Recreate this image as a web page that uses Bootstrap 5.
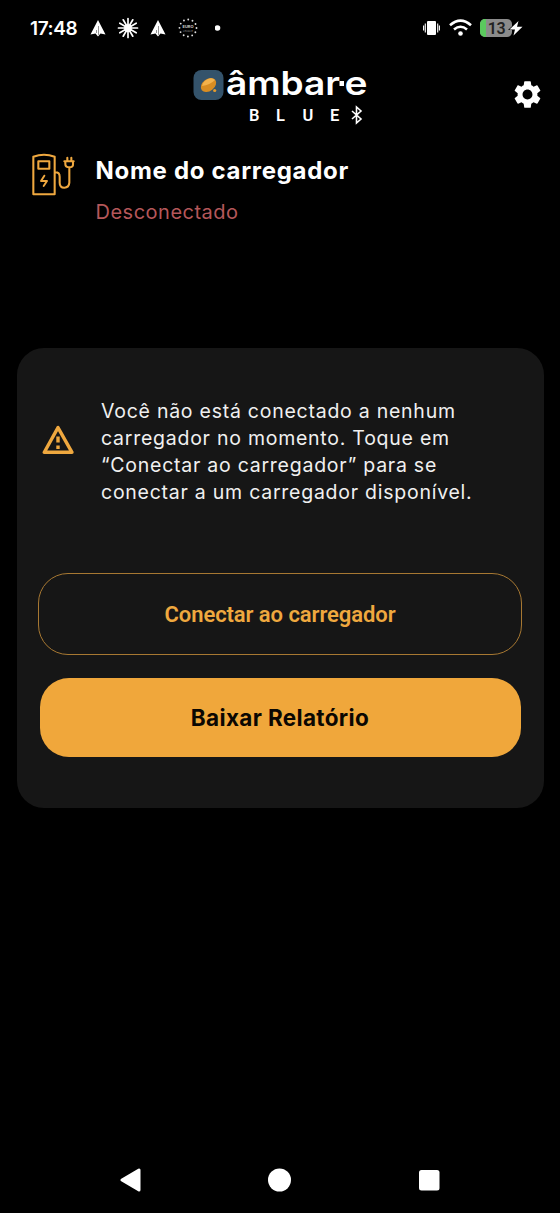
<!DOCTYPE html>
<html lang="pt-BR">
<head>
<meta charset="utf-8">
<meta name="viewport" content="width=device-width, initial-scale=1">
<title>Âmbar-e Blue</title>
<link href="https://cdn.jsdelivr.net/npm/bootstrap@5.3.0/dist/css/bootstrap.min.css" rel="stylesheet">
<script src="https://cdn.jsdelivr.net/npm/bootstrap@5.3.0/dist/js/bootstrap.bundle.min.js" defer></script>
<style>
  body { background:#000; color:#fff; font-family:Inter,"Open Sans",sans-serif; height:1213px; overflow:hidden; }
  svg { display:block; flex:none; }
  .status { height:56px; padding:0 37px 0 30px; }
  .clock { font:600 19px/1 Inter,sans-serif; width:60px; letter-spacing:-.4px; }
  .brand { height:88px; display:grid; grid-template-columns:1fr auto 1fr; padding:0 16px; }
  .gear { background:none; border:0; padding:0; justify-self:end; align-self:start; margin:22px 0 0; width:33px; }
  .charger { height:204px; padding:7px 30px 0; }
  .charger h1 { font-size:24px; line-height:32px; font-weight:700; margin:4px 0 11px; letter-spacing:.7px; }
  .charger p { font-size:20px; line-height:28px; color:#b5575a; font-weight:400; letter-spacing:.5px; }
  .panel { background:#161616; border-radius:27px; margin:0 16.5px; height:459.5px; padding:49.5px 21.5px 0; }
  .notice { font-size:19.5px; line-height:27.2px; font-weight:400; color:#f0f0f0; margin-left:27px; letter-spacing:.75px; }
  .notice span { display:block; white-space:nowrap; }
  .btn-connect, .btn-report { display:flex; align-items:center; justify-content:center; width:100%; font-size:22px; }
  .btn-connect { height:82px; border:1px solid #a77832; border-radius:30px; color:#efa83f; font-family:Roboto,sans-serif; font-weight:600; letter-spacing:-.07px; margin-top:67px; }
  .btn-report { height:78.5px; width:481px; border-radius:29px; background:#f0a73b; color:#0b0702; font-size:22.5px; font-weight:700; letter-spacing:.35px; margin:23px auto 0; border:0; }
  .sysnav { padding:0 120px; height:66px; }
</style>
</head>
<body class="d-flex flex-column">
<header class="status d-flex align-items-center">
  <span class="clock">17:48</span>
  <svg width="16" height="17" viewBox="0 0 16 17"><path d="M8 0 .5 14.500 5.500 13.500 8 16.500l2.500-3 5 1z" fill="#fff"/><path d="M8.500 6v9M6.500 10v3" stroke="#777" stroke-width=".8"/></svg>
  <svg style="margin-left:11px" width="22" height="22" viewBox="-11 -11 22 22"><g stroke="#fff" stroke-width="1.700" stroke-linecap="round"><path d="M0-9.500V9.500M-9.500 0H9.500M-8.200-4.800 8.200 4.800M-8.200 4.800 8.200-4.800M-4.800-8.200 4.800 8.200M-4.800 8.200 4.800-8.200"/></g><circle r="3.800" fill="#fff"/></svg>
  <svg style="margin-left:11px" width="16" height="17" viewBox="0 0 16 17"><path d="M8 0 .5 14.500 5.500 13.500 8 16.500l2.500-3 5 1z" fill="#fff"/><path d="M8.500 6v9M6.500 10v3" stroke="#777" stroke-width=".8"/></svg>
  <svg style="margin-left:12px" width="20" height="20" viewBox="-10 -10 20 20"><circle r="8.500" fill="none" stroke="#ddd" stroke-width="1.900" stroke-linecap="round" stroke-dasharray="0 4.450"/><text y="0" text-anchor="middle" font-size="4" font-weight="700" fill="#ccc">EURO</text><text y="3.500" text-anchor="middle" font-size="2.500" fill="#999">LEAGUE</text></svg>
  <svg style="margin-left:17px" width="6" height="6"><circle cx="2.500" cy="3" r="2.800" fill="#fff"/></svg>
  <svg class="ms-auto" width="17" height="16" viewBox="0 0 17 16"><rect x="4" y="1" width="9" height="14" rx="1" fill="#fff"/><path d="M2.300 3.500v9M14.700 3.500v9M.6 5.500v5M16.400 5.500v5" stroke="#fff" stroke-width="1.100"/></svg>
  <svg style="margin-left:9px" width="23" height="18" viewBox="0 0 23 18"><g fill="none" stroke="#fff" stroke-width="2.600"><path d="M1 6.300Q11.500-3 22 6.300M5 10.500q6.500-5.500 13 0"/></g><circle cx="11.500" cy="14.500" r="2.300" fill="#fff"/></svg>
  <svg style="margin-left:8px" width="43" height="20" viewBox="0 0 43 20"><defs><clipPath id="bat"><rect y="1" width="32" height="18" rx="5"/></clipPath></defs><g clip-path="url(#bat)"><path fill="#8b8b8b" d="M0 0h34v20H0z"/><path fill="#5bc95e" d="M0 0h6v20H0z"/></g><text x="16.500" y="15.500" text-anchor="middle" font-family="Roboto" font-size="16" font-weight="600" fill="#222" letter-spacing="-.4">13</text><path d="M38.500 3 29.500 11.500h5.500L33.500 17.500l9-8.700h-5.500z" fill="#fff" stroke="#000" stroke-width="1.200" paint-order="stroke"/></svg>
</header>

<div class="brand">
  <span></span>
  <svg width="176" height="76" viewBox="192 56 176 76" role="img" aria-label="âmbar-e blue">
    <rect x="193.500" y="70" width="30" height="30" rx="8" fill="#34536b"/>
    <ellipse cx="208.500" cy="85" rx="8.500" ry="6" transform="rotate(-38 208.500 85)" fill="#d98d22"/>
    <path d="M202 86q8-1 13-6-3-3-7-1-5 2-6 7z" fill="#f4b24b"/>
    <circle cx="214.700" cy="90.500" r="1.600" fill="#e59b2d"/>
    <text x="226" y="94.500" font-size="33" font-weight="600" fill="#fff" textLength="114" lengthAdjust="spacingAndGlyphs">âmbar</text>
    <rect x="339.500" y="81" width="4.500" height="5" fill="#fff"/>
    <text x="344.500" y="94.500" font-size="33" font-weight="600" fill="#fff" textLength="23" lengthAdjust="spacingAndGlyphs">e</text>
    <text x="249 276 302.500 330" y="120.500" font-family="Roboto" font-size="16.500" font-weight="600" fill="#fff">BLUE</text>
    <path d="M352 111l9 8-4.500 4v-16l4.500 4-9 8" fill="none" stroke="#fff" stroke-width="1.600"/>
  </svg>
  <button class="gear" aria-label="Configurações"><svg width="33" height="33" viewBox="0 0 24 24" fill="#fff"><path d="M19.140 12.940c.04-.3.06-.61.06-.94 0-.32-.02-.64-.07-.94l2.030-1.580a.49.49 0 0 0 .12-.61l-1.920-3.320a.488.488 0 0 0-.59-.22l-2.390.96c-.5-.38-1.030-.7-1.620-.94l-.36-2.540a.484.484 0 0 0-.48-.41h-3.840c-.24 0-.43.17-.47.41l-.36 2.540c-.59.24-1.130.57-1.620.94l-2.390-.96c-.22-.08-.47 0-.59.22L2.740 8.870c-.12.21-.08.47.12.61l2.030 1.580c-.05.3-.09.63-.09.94s.02.64.07.94l-2.030 1.580a.49.49 0 0 0-.12.61l1.920 3.320c.12.22.37.29.59.22l2.390-.96c.5.38 1.030.7 1.620.94l.36 2.540c.05.24.24.41.48.41h3.840c.24 0 .44-.17.47-.41l.36-2.540c.59-.24 1.130-.56 1.620-.94l2.390.96c.22.08.47 0 .59-.22l1.920-3.320c.12-.22.07-.47-.12-.61l-2.010-1.580zM12 15.600c-1.980 0-3.600-1.620-3.600-3.600s1.620-3.600 3.600-3.600 3.600 1.620 3.600 3.600-1.620 3.600-3.600 3.600z"/></svg></button>
</div>

<section class="charger d-flex">
  <svg width="46" height="46" viewBox="29 19 138 138" fill="none" stroke="#efa83f" stroke-width="6.200" stroke-linejoin="round" stroke-linecap="round"><path d="M39 149V36Q71 24 103 36V149zM54 50h33v22H54zM105 83q13 0 13 13v18q0 15 14 15t15-15V68M132 50h28M135 50v8q0 10 12 10t11-10V50M141 39v10M153 39v10"/><path d="M72 93 62 109h18L70 124" stroke-width="5.800"/></svg>
  <div style="margin-left:19.500px"><h1>Nome do carregador</h1><p class="m-0">Desconectado</p></div>
</section>

<main class="panel">
  <div class="d-flex">
    <svg style="margin:26px 0 0 4px" width="32" height="32" viewBox="0 0 32 32" fill="none" stroke="#efa83f" stroke-width="3.400" stroke-linejoin="round"><path d="M16 3.600 2.300 28.300H30z"/><path d="M16 12.500v6M16 21.500v3.500"/></svg>
    <p class="notice mb-0"><span>Você não está conectado a nenhum</span><span>carregador no momento. Toque em</span><span>“Conectar ao carregador” para se</span><span>conectar a um carregador disponível.</span></p>
  </div>
  <button class="btn btn-connect">Conectar ao carregador</button>
  <button class="btn btn-report">Baixar Relatório</button>
</main>

<nav class="sysnav mt-auto d-flex justify-content-between align-items-center">
  <svg width="21" height="24" viewBox="0 0 21 24"><path d="M2 12 19 2v20z" fill="#fff" stroke="#fff" stroke-width="3" stroke-linejoin="round"/></svg>
  <svg width="24" height="24"><circle cx="11.500" cy="12" r="11.500" fill="#fff"/></svg>
  <svg width="21" height="21"><rect width="20.500" height="20.500" rx="2.500" fill="#fff"/></svg>
</nav>
</body>
</html>
